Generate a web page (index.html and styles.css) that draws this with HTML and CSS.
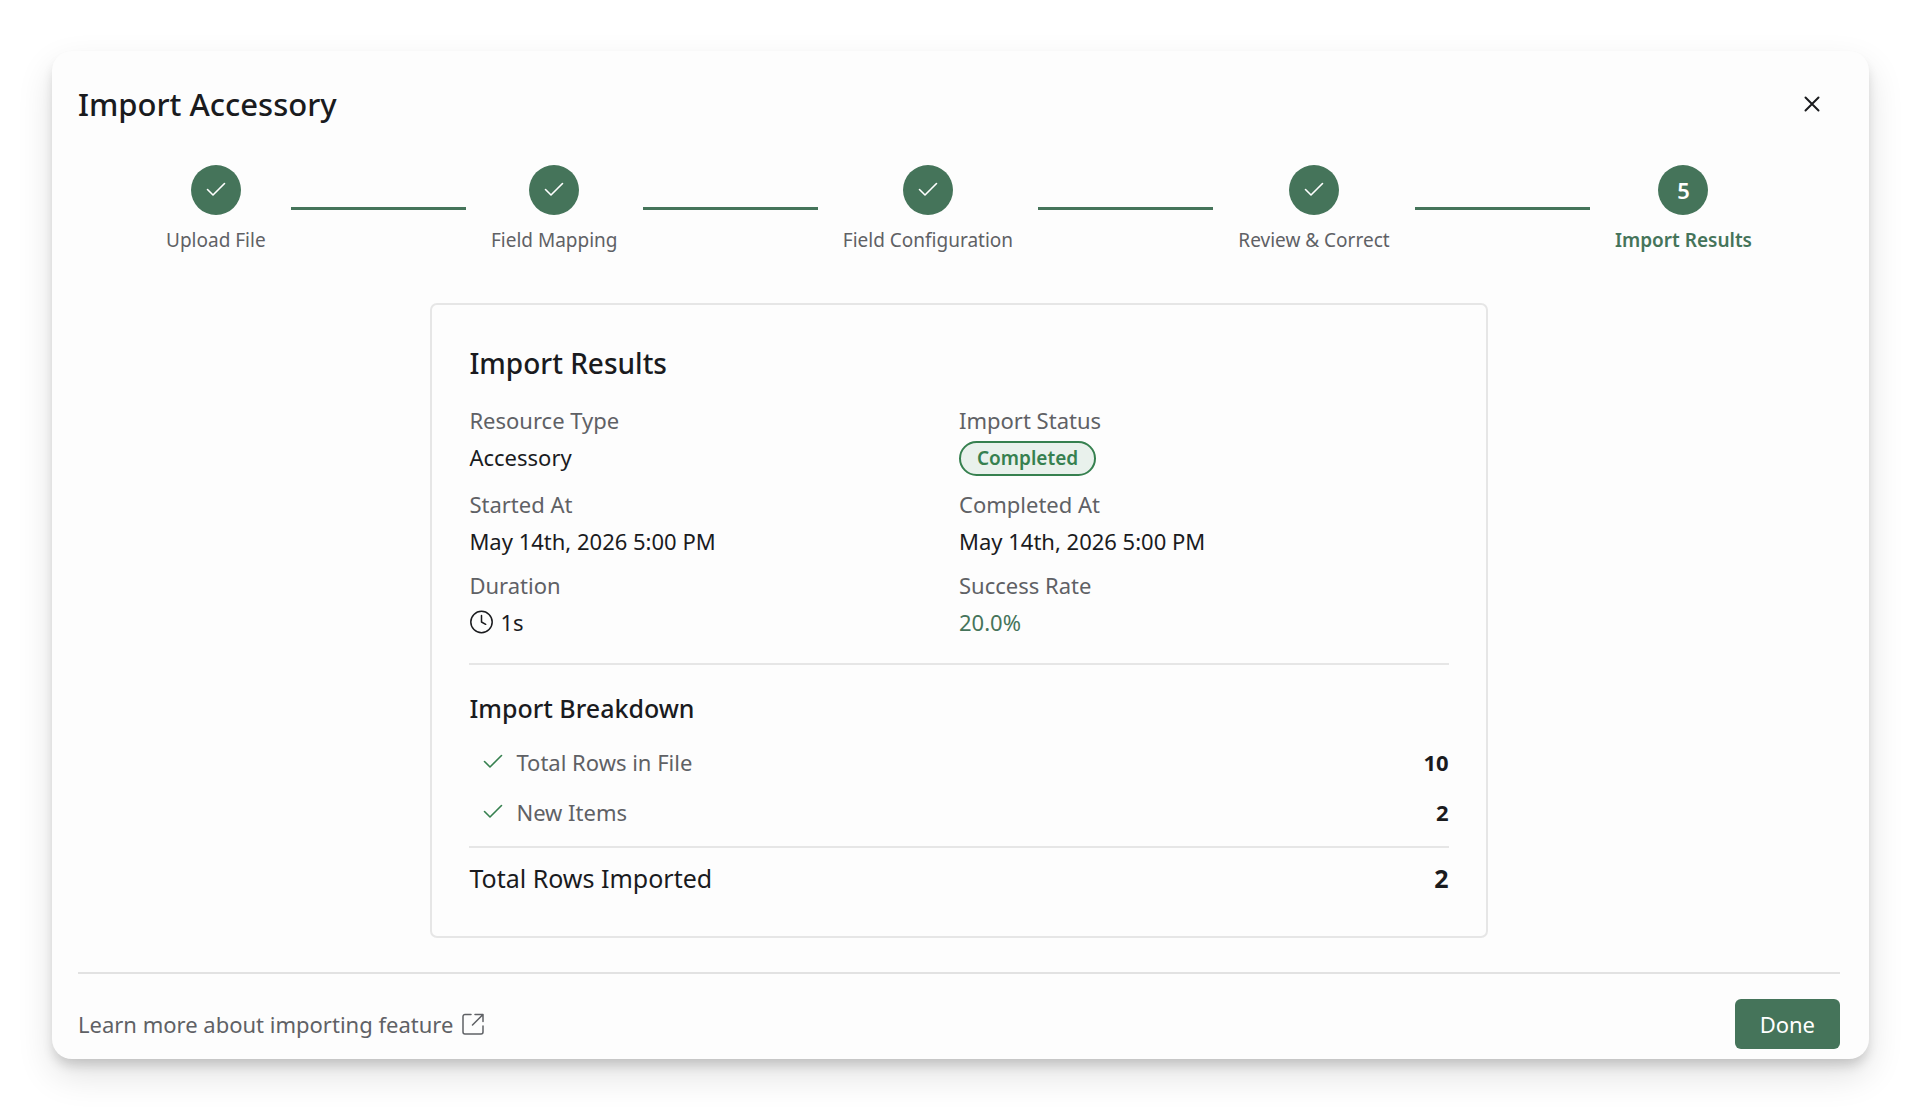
FILE: index.html
```html
<!DOCTYPE html>
<html lang="en">
<head>
<meta charset="utf-8">
<meta name="viewport" content="width=device-width, initial-scale=1">
<title>Import Accessory</title>
<link rel="stylesheet" href="styles.css">
</head>
<body>
<svg class="sprite" aria-hidden="true">
  <symbol id="check" viewBox="0 0 20 20"><path d="M1.500 9.500 7 15 18.500 3.500" fill="none" stroke="currentColor" stroke-width="1.600" stroke-linecap="round" stroke-linejoin="round"/></symbol>
</svg>
<main class="modal" role="dialog" aria-labelledby="modal-title">
  <header class="modal-header">
    <h1 class="modal-title" id="modal-title">Import Accessory</h1>
    <button class="close" type="button" aria-label="Close">
      <svg width="16" height="16" viewBox="0 0 16 16"><path d="M1.500 1.500 14.500 14.500M14.500 1.500 1.500 14.500" fill="none" stroke="currentColor" stroke-width="2" stroke-linecap="round"/></svg>
    </button>
  </header>

  <ol class="steps">
    <li class="step"><span class="step-dot"><svg class="check"><use href="#check"/></svg></span><span class="step-label">Upload File</span></li>
    <li class="step-line" aria-hidden="true"></li>
    <li class="step"><span class="step-dot"><svg class="check"><use href="#check"/></svg></span><span class="step-label">Field Mapping</span></li>
    <li class="step-line" aria-hidden="true"></li>
    <li class="step"><span class="step-dot"><svg class="check"><use href="#check"/></svg></span><span class="step-label">Field Configuration</span></li>
    <li class="step-line" aria-hidden="true"></li>
    <li class="step"><span class="step-dot"><svg class="check"><use href="#check"/></svg></span><span class="step-label">Review &amp; Correct</span></li>
    <li class="step-line" aria-hidden="true"></li>
    <li class="step current" aria-current="step"><span class="step-dot">5</span><span class="step-label">Import Results</span></li>
  </ol>

  <section class="card">
    <h2 class="card-title">Import Results</h2>
    <dl class="details">
      <div class="detail"><dt>Resource Type</dt><dd>Accessory</dd></div>
      <div class="detail"><dt>Import Status</dt><dd><span class="badge">Completed</span></dd></div>
      <div class="detail"><dt>Started At</dt><dd>May 14th, 2026 5:00 PM</dd></div>
      <div class="detail"><dt>Completed At</dt><dd>May 14th, 2026 5:00 PM</dd></div>
      <div class="detail"><dt>Duration</dt><dd>
        <svg class="clock" viewBox="0 0 24 24"><g fill="none" stroke="currentColor" stroke-width="1.500" stroke-linecap="round" stroke-linejoin="round"><circle cx="12.500" cy="12" r="10.700"/><path d="M12.500 5.500V12l4.200 2.300"/></g></svg>
        1s</dd></div>
      <div class="detail"><dt>Success Rate</dt><dd class="rate">20.0%</dd></div>
    </dl>
    <h3 class="breakdown-title">Import Breakdown</h3>
    <dl class="breakdown">
      <div class="row"><dt><svg class="check"><use href="#check"/></svg>Total Rows in File</dt><dd>10</dd></div>
      <div class="row"><dt><svg class="check"><use href="#check"/></svg>New Items</dt><dd>2</dd></div>
      <div class="row total"><dt>Total Rows Imported</dt><dd>2</dd></div>
    </dl>
  </section>

  <footer class="modal-footer">
    <a class="learn" href="#">Learn more about importing feature
      <svg width="22" height="22" viewBox="0 0 22 22"><path d="M9 1.500H3a2 2 0 0 0-2 2V19a2 2 0 0 0 2 2h16a2 2 0 0 0 2-2v-6M13 1.500h8v7M21 1.500 10.500 12" fill="none" stroke="currentColor" stroke-width="1.500" stroke-linecap="round" stroke-linejoin="round"/></svg>
    </a>
    <button class="done" type="button">Done</button>
  </footer>
</main>
</body>
</html>
```
FILE: styles.css
```css
* { box-sizing: border-box; }

body {
  margin: 0;
  padding: 51px 51px 52px 52px;
  background: #fff;
  color: #1a1b1e;
  font: 22px/32px "Noto Sans", sans-serif;
}

h1, h2, h3, ol, dl, dd { margin: 0; padding: 0; }
h1, h2, h3 { font-weight: 500; }
button { font: inherit; border: 0; cursor: pointer; }
svg { flex: none; }
.sprite { display: none; }

.modal {
  padding: 25px 29px 10px 26px;
  border-radius: 20px;
  background: #fdfdfd;
  box-shadow: 0 16px 36px rgba(0, 0, 0, .12), 0 8px 12px -2px rgba(0, 0, 0, .16);
}

.modal-header {
  display: flex;
  align-items: center;
  justify-content: space-between;
}
.modal-title { font-size: 31px; line-height: 52px; }
.close {
  display: flex;
  padding: 20px;
  background: none;
  color: inherit;
}

/* Progress steps */
.steps {
  display: flex;
  align-items: center;
  gap: 25px;
  margin-top: 33px;
  padding: 0 88px;
  list-style: none;
}
.step {
  display: flex;
  flex-direction: column;
  align-items: center;
  gap: 13px;
}
.step-dot {
  display: flex;
  align-items: center;
  justify-content: center;
  width: 50px;
  height: 50px;
  border-radius: 50%;
  background: #45745a;
  color: #fff;
  font-weight: 600;
}
.step-label {
  color: #5f6165;
  font-size: 19px;
  line-height: 24px;
  white-space: nowrap;
}
.current .step-label { color: #45745a; font-weight: 600; }
.step-line { flex: 1; height: 3px; background: #45745a; }
.check { width: 20px; height: 20px; }

/* Results card */
.card {
  width: 60%;
  margin: 51px auto 34px;
  padding: 37px 37px 35px;
  border: 2px solid #e6e6e6;
  border-radius: 7px;
}
.card-title { font-size: 28px; line-height: 42px; }
.details {
  display: grid;
  grid-template-columns: 1fr 1fr;
  row-gap: 12px;
  margin-top: 20px;
  padding-bottom: 25px;
  border-bottom: 2px solid #e6e6e6;
}
.detail dt { margin-bottom: 5px; color: #5f6165; }
.detail dd { display: flex; align-items: center; gap: 7px; }
.detail .rate { color: #45745a; }
.badge {
  padding: 0 16px;
  border: 2px solid #36804f;
  border-radius: 18px;
  background: #e9f1ec;
  color: #36804f;
  font-size: 19px;
  font-weight: 600;
  line-height: 31px;
}
.clock { width: 24px; height: 24px; }

.breakdown-title { margin-top: 25px; font-size: 25px; line-height: 36px; }
.breakdown { margin-top: 11px; }
.row { display: flex; justify-content: space-between; line-height: 50px; }
.row dt {
  display: flex;
  align-items: center;
  gap: 13px;
  padding-left: 14px;
  color: #5f6165;
}
.row dd { font-weight: 700; }
.row .check { color: #36804f; }
.total {
  margin-top: 9px;
  padding-top: 7px;
  border-top: 2px solid #e6e6e6;
  font-size: 25px;
  line-height: 46px;
}
.total dt { padding-left: 0; color: inherit; }

.modal-footer {
  display: flex;
  align-items: center;
  justify-content: space-between;
  padding-top: 25px;
  border-top: 2px solid #e2e2e2;
}
.learn {
  display: flex;
  align-items: center;
  gap: 9px;
  color: #5f6165;
  text-decoration: none;
}
.done {
  padding: 9px 25px;
  border-radius: 6px;
  background: #45745a;
  color: #fff;
}
```
